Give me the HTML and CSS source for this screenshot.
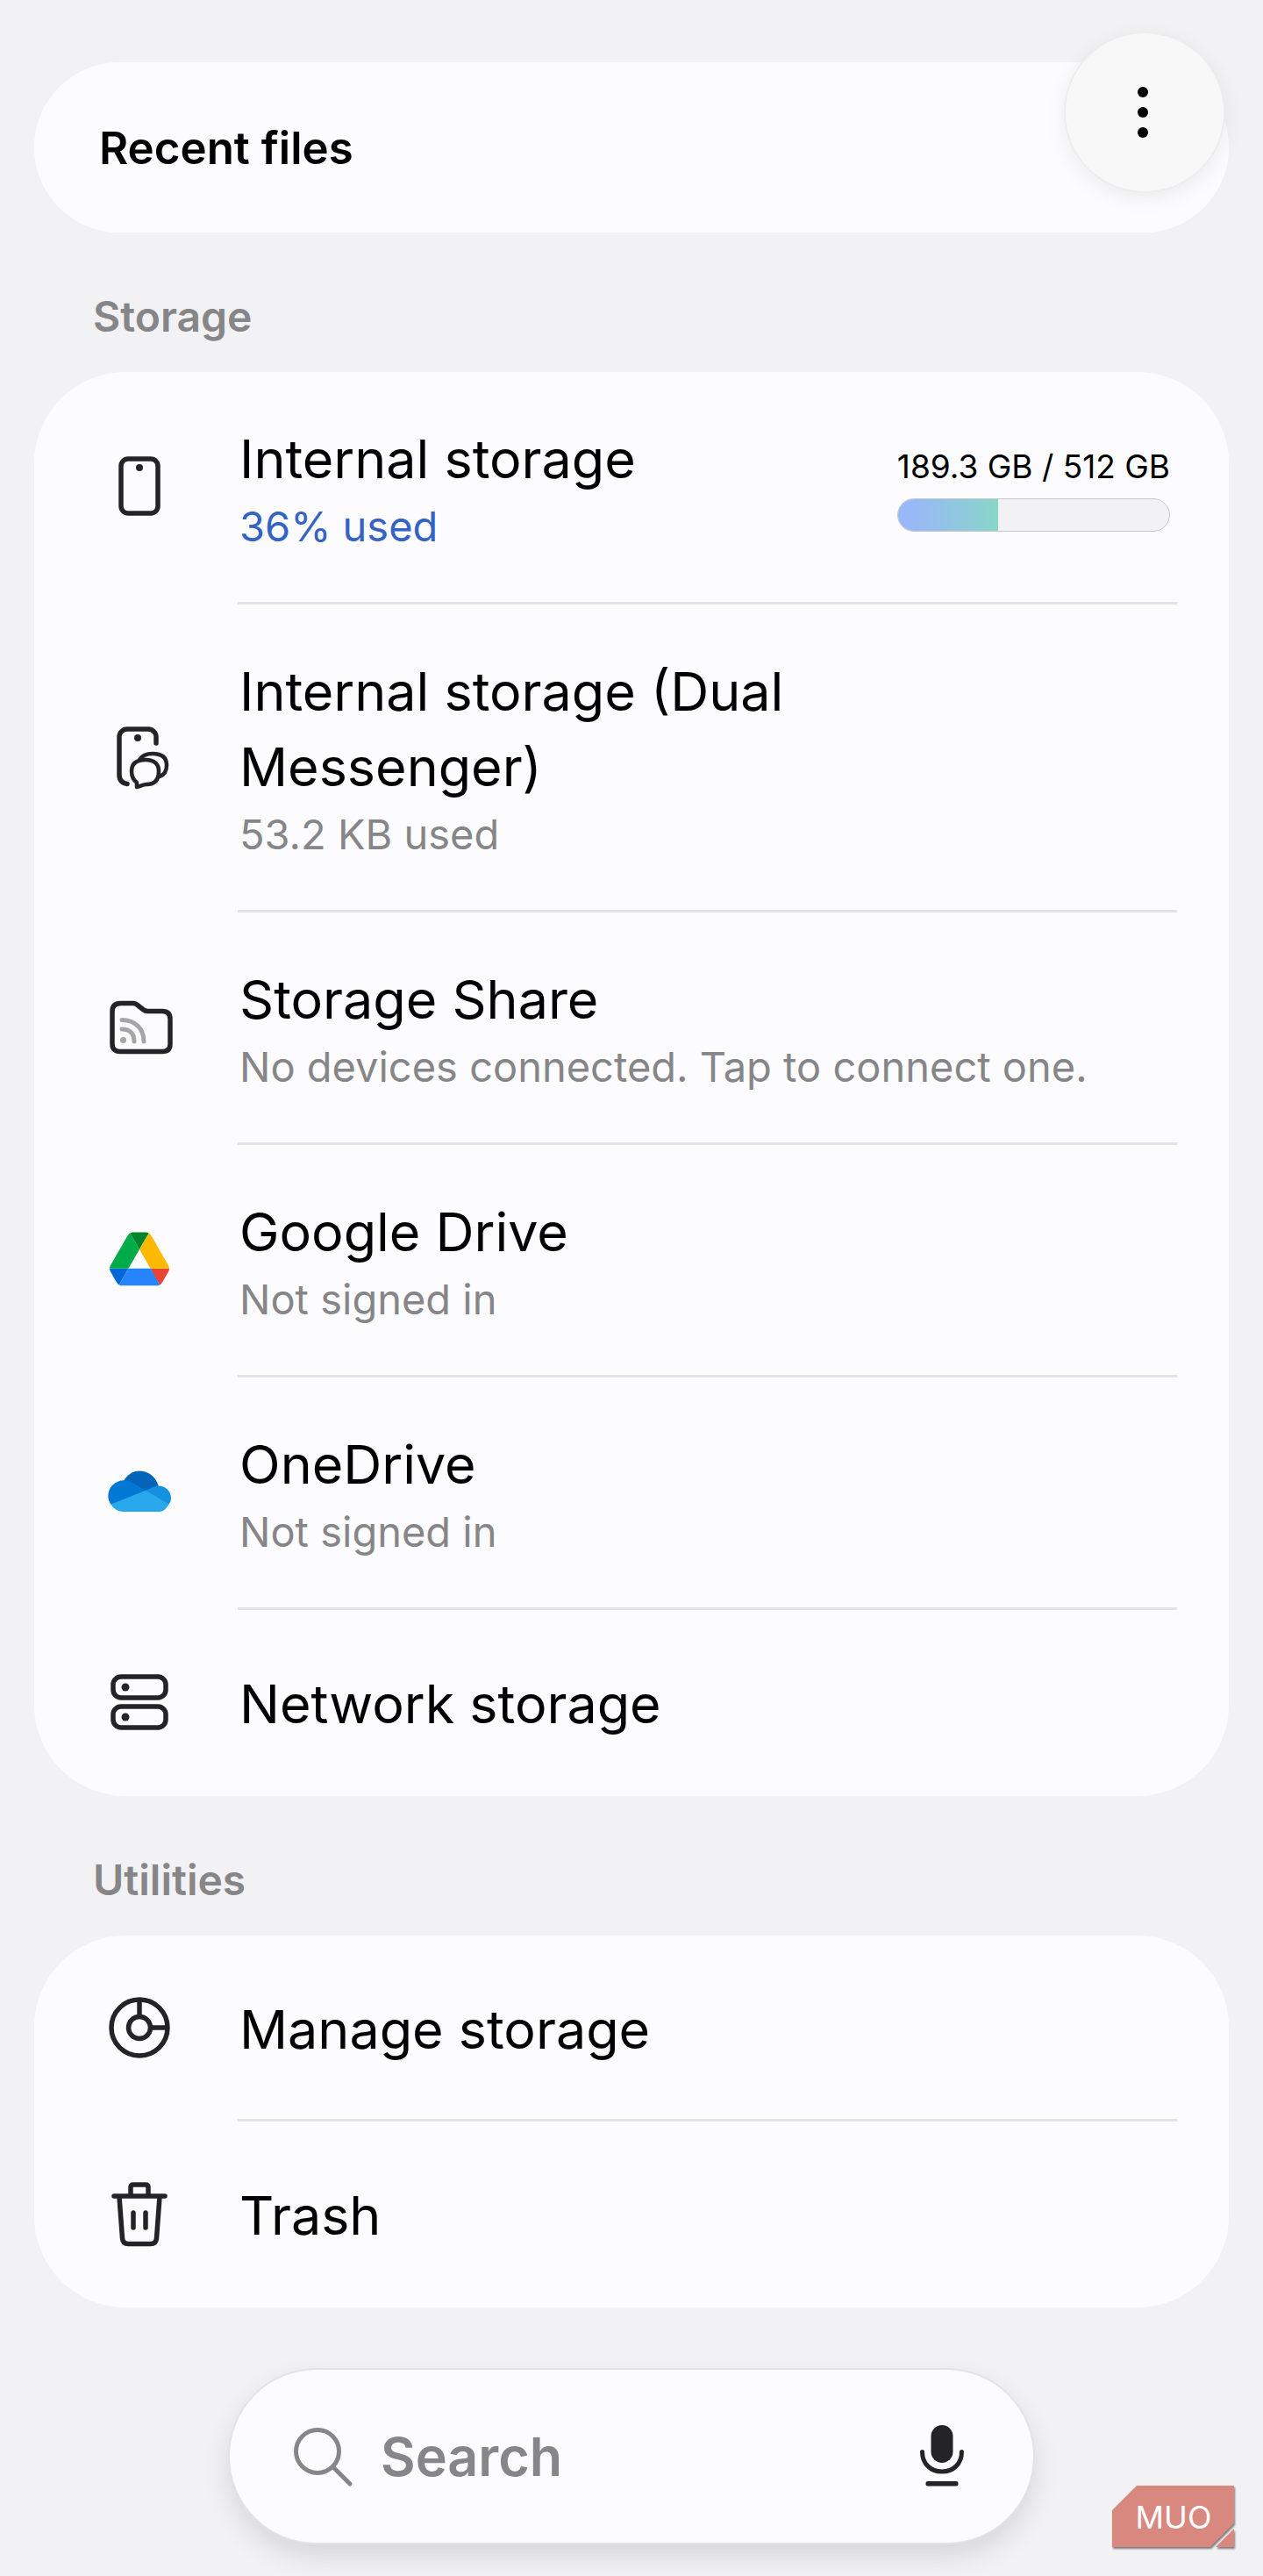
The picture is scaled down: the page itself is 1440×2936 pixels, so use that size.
FILE: index.html
```html
<!DOCTYPE html>
<html lang="en">
<head>
  <meta charset="UTF-8" />
  <meta name="viewport" content="width=device-width, initial-scale=1.0"/>
  <title>My Files</title>
  <link rel="stylesheet" href="styles.css">
</head>
<body>
  <button class="menu" type="button" aria-label="More options">
    <svg viewBox="0 0 80 80" fill="#000">
      <circle cx="38" cy="17" r="6"/>
      <circle cx="38" cy="40" r="6"/>
      <circle cx="38" cy="63" r="6"/>
    </svg>
  </button>

  <main>
    <a class="card recent" href="#">Recent files</a>

    <h2>Storage</h2>
    <div class="card">
      <a class="row" href="#">
        <svg class="icon" viewBox="0 0 80 80">
          <rect x="19" y="8" width="42" height="62" rx="8"/>
          <circle class="dot" cx="40" cy="18" r="4"/>
        </svg>
        <div class="content">
          <div class="text">
            <div class="title">Internal storage</div>
            <div class="sub used">36% used</div>
          </div>
          <div class="usage">
            <div class="amount">189.3 GB / 512 GB</div>
            <div class="bar" role="meter" aria-label="Used space" aria-valuemin="0" aria-valuemax="512" aria-valuenow="189.3">
              <div class="fill" style="width: 36.97%"></div>
            </div>
          </div>
        </div>
      </a>

      <a class="row" href="#">
        <svg class="icon" viewBox="0 0 80 80">
          <path d="M59 24V17a9 9 0 0 0-9-9H26a9 9 0 0 0-9 9v43q0 9 9 10.500"/>
          <circle class="dot" cx="38" cy="18" r="4"/>
          <g stroke-width="4.500">
            <path d="M40 43C43 38 48 36 55 36c11 0 16 5 16 13 0 7-2 11-8 13"/>
            <path d="M37 69C33 66 31 62 31 56c0-9 6-13 16-13 10 0 15 5 15 13 0 10-5 15-14 15-4 0-6 2-11 3z"/>
          </g>
        </svg>
        <div class="content">
          <div class="text">
            <div class="title">Internal storage (Dual Messenger)</div>
            <div class="sub">53.2 KB used</div>
          </div>
        </div>
      </a>

      <a class="row" href="#">
        <svg class="icon" viewBox="0 0 80 80">
          <path d="M9 22q0-9.500 9.500-9.500H33q3 0 6 3l5 4q2.500 2 5.500 2H66q9 0 9 9V59q0 8.500-9 8.500H18q-9 0-9-8.500z"/>
          <g stroke="#a5a5a7" stroke-width="5">
            <path d="M20 31.500c15 0 25 10 25 24.500"/>
            <path d="M20 42c9 0 14 5 14 14"/>
          </g>
          <circle cx="21.500" cy="54.500" r="3.500" fill="#a5a5a7" stroke="none"/>
        </svg>
        <div class="content">
          <div class="text">
            <div class="title">Storage Share</div>
            <div class="sub">No devices connected. Tap to connect one.</div>
          </div>
        </div>
      </a>

      <a class="row" href="#">
        <svg class="icon logo" viewBox="-7.700 -11 102.700 102.700">
          <path fill="#0066da" d="m6.600 66.850 3.850 6.650c.8 1.400 1.950 2.500 3.300 3.300l13.750-23.800h-27.500c0 1.550.4 3.100 1.200 4.500z"/>
          <path fill="#00ac47" d="m43.650 25-13.750-23.800c-1.350.8-2.500 1.900-3.300 3.300l-25.400 44a9.060 9.060 0 0 0 -1.200 4.500h27.500z"/>
          <path fill="#ea4335" d="m73.550 76.800c1.350-.8 2.500-1.900 3.300-3.300l1.600-2.750 7.650-13.250c.8-1.400 1.200-2.950 1.200-4.500h-27.500l5.850 11.500z"/>
          <path fill="#00832d" d="m43.650 25 13.750-23.800c-1.350-.8-2.900-1.200-4.500-1.200h-18.500c-1.600 0-3.150.45-4.500 1.200z"/>
          <path fill="#2684fc" d="m59.800 53h-32.300l-13.750 23.800c1.350.8 2.900 1.200 4.500 1.200h50.800c1.600 0 3.150-.45 4.500-1.200z"/>
          <path fill="#ffba00" d="m73.400 26.500-12.700-22c-.8-1.400-1.950-2.500-3.300-3.300l-13.750 23.800 16.150 28h27.450c0-1.550-.4-3.100-1.200-4.500z"/>
        </svg>
        <div class="content">
          <div class="text">
            <div class="title">Google Drive</div>
            <div class="sub">Not signed in</div>
          </div>
        </div>
      </a>

      <a class="row" href="#">
        <svg class="icon logo" viewBox="0 0 80 80">
          <path fill="#0364b8" d="M22 27C26 20 32 15.500 40 15.500c10 0 18.500 6.500 21.700 17L47 39z"/>
          <path fill="#0078d4" d="M8 54C5.500 51 4.300 48 4.300 44c0-10 8-17.800 18-17.800 4 0 6.700 1 9.700 2.800L48 38 30 48z"/>
          <path fill="#1490df" d="M47 38l8-4c3-1.300 5-1.600 7-1.600 8 0 14 6.500 14 14.300 0 2.500-1 5-2.500 6.800L58 52z"/>
          <path fill="#28a8ea" d="M7.500 53.500L47 37.700l26.500 15.500C71 58.500 67 62 61.500 62H22C16 62 10.500 59 7.500 53.500z"/>
        </svg>
        <div class="content">
          <div class="text">
            <div class="title">OneDrive</div>
            <div class="sub">Not signed in</div>
          </div>
        </div>
      </a>

      <a class="row single" href="#">
        <svg class="icon" viewBox="0 0 80 80">
          <rect x="10" y="11" width="60" height="24" rx="9"/>
          <rect x="10" y="45" width="60" height="24" rx="9"/>
          <circle class="dot" cx="24" cy="23" r="4.500"/>
          <circle class="dot" cx="24" cy="57" r="4.500"/>
        </svg>
        <div class="content">
          <div class="title">Network storage</div>
        </div>
      </a>
    </div>

    <h2>Utilities</h2>
    <div class="card">
      <a class="row single" href="#">
        <svg class="icon" viewBox="0 0 80 80">
          <circle cx="40" cy="40" r="32"/>
          <circle cx="40" cy="40" r="12.500"/>
          <path d="M40 9v18M53 40h18"/>
        </svg>
        <div class="content">
          <div class="title">Manage storage</div>
        </div>
      </a>

      <a class="row single" href="#">
        <svg class="icon" viewBox="0 0 80 80">
          <path d="M11 20h58M30 19V10q0-3 3-3h14q3 0 3 3v9"/>
          <path d="M17 21l3.500 47q.5 6.500 7 6.500h25q6.500 0 7-6.500L63 21M33 39v17M47 39v17"/>
        </svg>
        <div class="content">
          <div class="title">Trash</div>
        </div>
      </a>
    </div>
  </main>

  <form class="search">
    <svg viewBox="0 0 80 80" fill="none" stroke="#868688" stroke-width="5" stroke-linecap="round">
      <circle cx="34" cy="34" r="24.500"/>
      <path d="M52 52l19 19"/>
    </svg>
    <input type="text" placeholder="Search" aria-label="Search">
    <button type="button" aria-label="Voice search">
      <svg viewBox="0 0 80 80" fill="#242426">
        <rect x="27.500" y="4" width="25" height="43" rx="12.500"/>
        <path d="M17.500 34.500c0 13 9 22.500 22.500 22.500s22.500-9.500 22.500-22.500" fill="none" stroke="#242426" stroke-width="5" stroke-linecap="round"/>
        <rect x="21.500" y="68" width="37" height="5.500" rx="2"/>
      </svg>
    </button>
  </form>

  <div class="badge">
    <svg viewBox="0 0 140 72" fill="#d98880">
      <path d="M28 0h111v43l-27 27H0V28z"/>
      <path d="M139 49v21h-21z"/>
    </svg>
    <span>MUO</span>
  </div>
</body>
</html>
```

FILE: styles.css
```css
* {
  box-sizing: border-box;
}
body {
  font-family: Inter, "Liberation Sans", sans-serif;
  margin: 0;
  padding: 71px 39px 39px;
  background: #f2f2f4;
  color: #000;
  position: relative;
}
a {
  color: inherit;
  text-decoration: none;
}
button {
  border: none;
  padding: 0;
  background: none;
}
svg {
  display: block;
  width: 80px;
  height: 80px;
}
h2 {
  margin: 0;
  padding: 66px 67px 33px;
  font-size: 48px;
  font-weight: 600;
  line-height: 60px;
  color: #868688;
}
.card {
  display: block;
  background: #fcfcfe;
  border-radius: 104px;
}
.recent {
  padding: 68px 74px 66px;
  font-size: 51px;
  font-weight: 600;
  line-height: 60px;
}
.row {
  display: flex;
  align-items: center;
  padding: 0 59px 0 80px;
}
.icon {
  flex: none;
  margin-right: 72px;
  margin-bottom: 3px;
  fill: none;
  stroke: #242426;
  stroke-width: 5.5;
  stroke-linecap: round;
  stroke-linejoin: round;
}
.icon .dot {
  fill: #242426;
  stroke: none;
}
.logo {
  stroke: none;
}
.content {
  flex: 1;
  display: flex;
  align-items: center;
  padding: 56px 0 53px 2px;
  border-bottom: 3px solid #e3e3e5;
}
.single .content {
  padding: 64px 0 59px 2px;
}
.row:last-child .content {
  border-bottom: none;
  padding-bottom: 62px;
}
.text {
  flex: 1;
}
.title {
  max-width: 720px;
  font-size: 61px;
  line-height: 86px;
}
.sub {
  font-size: 47px;
  line-height: 67px;
  color: #868688;
}
.used {
  color: #3563c4;
}
.usage {
  padding-right: 8px;
}
.amount {
  font-size: 37px;
  line-height: 48px;
  margin-bottom: 12px;
}
.bar {
  height: 38px;
  border: 1px solid #c6c6ca;
  border-radius: 19px;
  background: #f2f2f4;
  overflow: hidden;
}
.fill {
  height: 100%;
  background: linear-gradient(to right, #98b8f8 15%, #88d6c8);
}
.menu {
  position: absolute;
  top: 38px;
  right: 45px;
  width: 180px;
  height: 180px;
  display: flex;
  align-items: center;
  justify-content: center;
  border-radius: 50%;
  background: #f8f8f9;
  box-shadow: 0 0 0 2px #ededee, 0 6px 24px rgba(0, 0, 0, 0.08);
}
.search {
  display: flex;
  align-items: center;
  height: 197px;
  margin: 71px 223px 0;
  padding: 0 64px 0 66px;
  border-radius: 99px;
  background: #fcfcfe;
  box-shadow: 0 0 0 2px #e3e3e5, 0 14px 32px rgba(0, 0, 0, 0.12);
}
.search input {
  flex: 1;
  min-width: 0;
  margin-left: 26px;
  padding: 0;
  border: none;
  outline: none;
  background: none;
  font: 600 61px Inter, "Liberation Sans", sans-serif;
}
.search input::placeholder {
  color: #868688;
  opacity: 1;
}
.badge {
  position: absolute;
  right: 32px;
  bottom: 32px;
  display: grid;
  place-items: center;
  color: #fff;
  font-size: 36px;
  line-height: 40px;
}
.badge svg,
.badge span {
  grid-area: 1 / 1;
}
.badge span {
  z-index: 1;
}
.badge svg {
  width: 140px;
  height: 72px;
  filter: drop-shadow(1px 2px 1px rgba(0, 0, 0, 0.5));
}
```
